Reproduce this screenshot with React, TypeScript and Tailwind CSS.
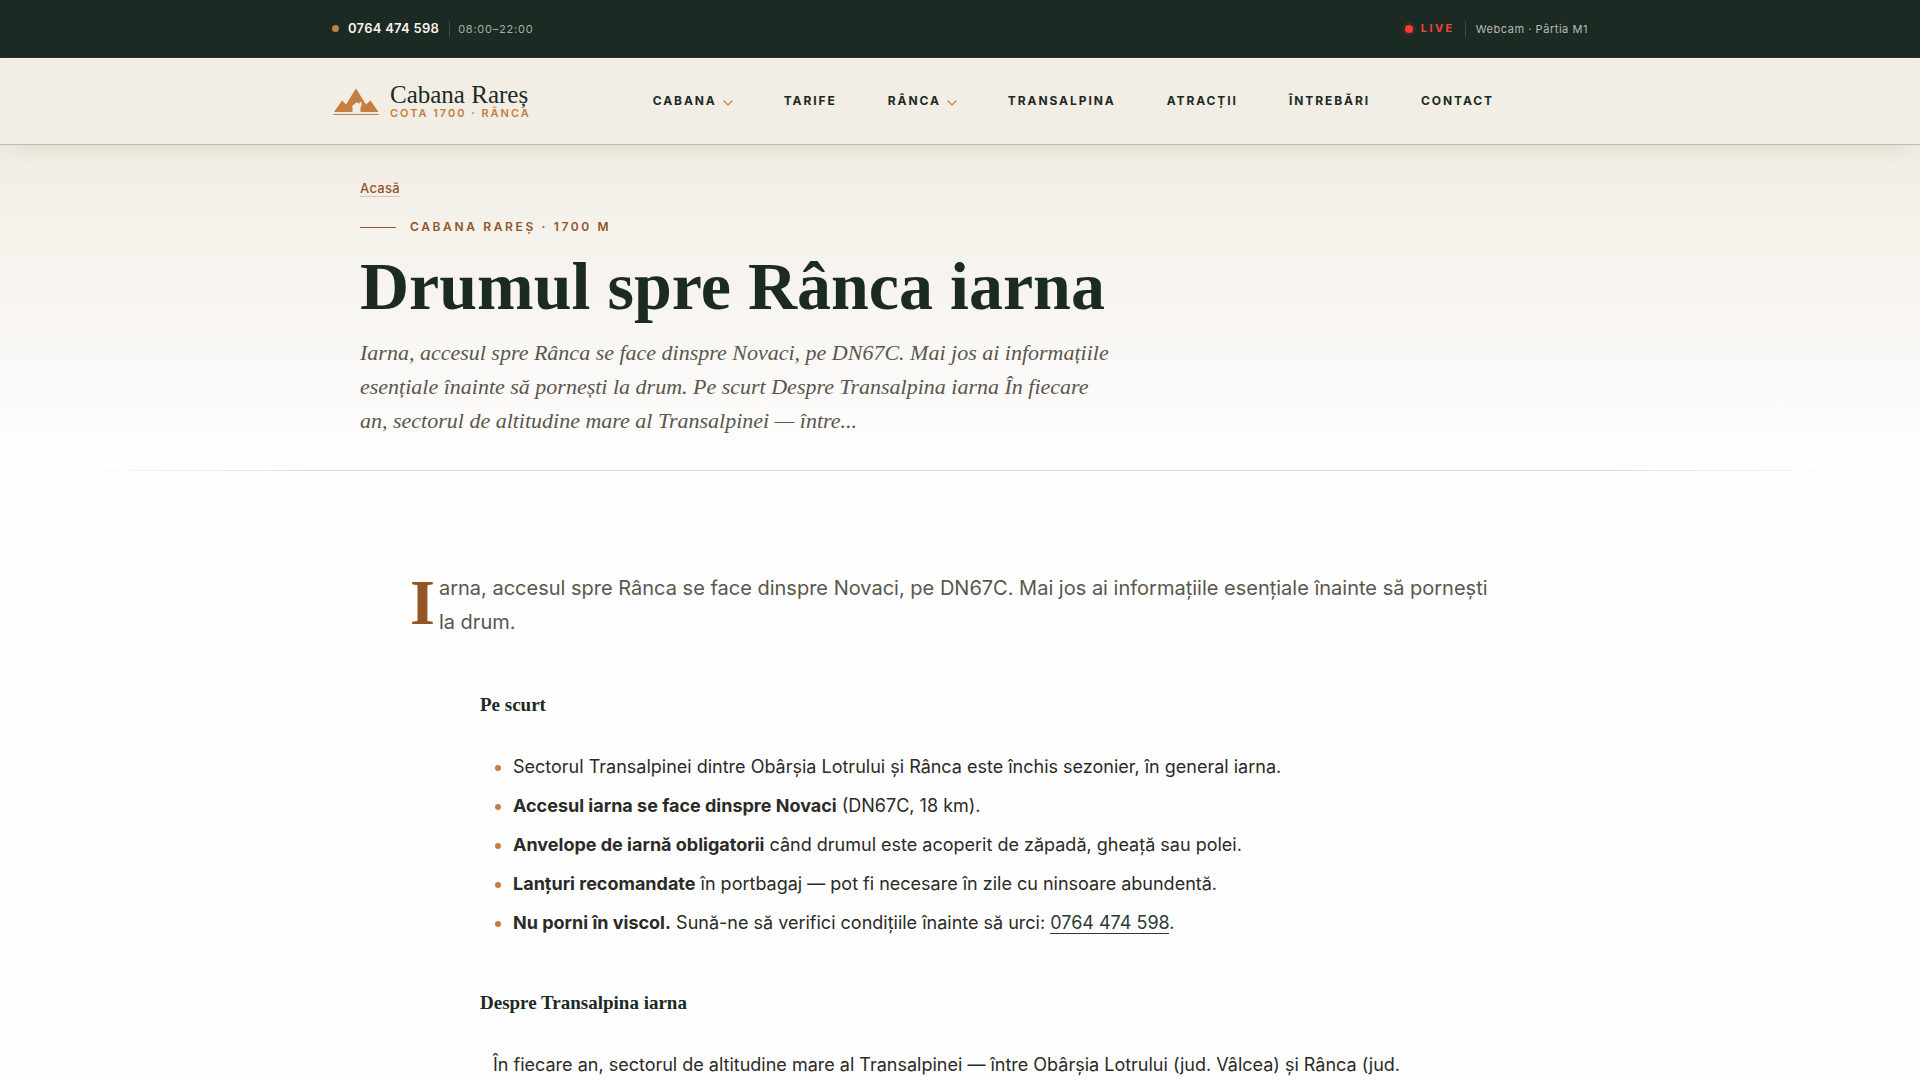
import React from "react";

const nav = [
  { label: "Cabana", menu: true },
  { label: "Tarife" },
  { label: "Rânca", menu: true },
  { label: "Transalpina" },
  { label: "Atracții" },
  { label: "Întrebări" },
  { label: "Contact" },
];

const points: { strong?: string; text: string; phone?: boolean }[] = [
  { text: "Sectorul Transalpinei dintre Obârșia Lotrului și Rânca este închis sezonier, în general iarna." },
  { strong: "Accesul iarna se face dinspre Novaci", text: " (DN67C, 18 km)." },
  { strong: "Anvelope de iarnă obligatorii", text: " când drumul este acoperit de zăpadă, gheață sau polei." },
  { strong: "Lanțuri recomandate", text: " în portbagaj — pot fi necesare în zile cu ninsoare abundentă." },
  { strong: "Nu porni în viscol.", text: " Sună-ne să verifici condițiile înainte să urci: ", phone: true },
];

function Logo() {
  return (
    <svg viewBox="0 0 48 28" className="h-7 w-12 shrink-0" aria-hidden="true">
      <path
        fill="#c67d42"
        d="M2 25 10 13.500 14 17.500 24 1.500 34 17.500 38.500 13.500 46.500 25H28.500V19.500H29.500V15H27.500V17L24.500 15.200 19.500 19.500H20.500V25Z"
      />
      <path stroke="#c67d42" strokeWidth="1" d="M1 27.500H47" />
    </svg>
  );
}

function Chevron() {
  return (
    <svg viewBox="0 0 10 6" className="mt-[3px] h-[6px] w-[10px]" fill="none" stroke="#c67d42" strokeWidth="1.100" aria-hidden="true">
      <path d="M0.500 0.500 5 5 9.500 0.500" />
    </svg>
  );
}

function TopBar() {
  return (
    <div className="border-b border-[#2c3128] bg-[#1b2a23] px-8">
      <div className="mx-auto flex h-[57px] max-w-[1256px] items-center justify-between text-[11px] tracking-[0.05em] text-[#a9aca5]">
        <div className="flex items-center">
          <span className="mr-[9px] size-[7px] rounded-full bg-[#c67d42]" />
          <a href="tel:0764474598" className="text-[13px] font-semibold tracking-[0.02em] text-[#f7f3ec]">
            0764 474 598
          </a>
          <span className="ml-[10px] border-l border-[#3f4b44] pl-2 leading-4 tracking-[0.07em]">08:00–22:00</span>
        </div>
        <a href="#webcam" className="flex items-center">
          <span className="mr-2 size-2 rounded-full bg-[#ff3b30] shadow-[0_0_0_3px_rgba(255,59,48,0.12)]" />
          <span className="font-bold tracking-[0.22em] text-[#f0433a]">LIVE</span>
          <span className="ml-[10px] border-l border-[#3f4b44] pl-[10px] leading-4 text-[#b8bab4]">Webcam · Pârtia M1</span>
        </a>
      </div>
    </div>
  );
}

function Header() {
  return (
    <header className="relative z-10 border-b border-[#bfb9a9] bg-[#f2ede5] px-8 shadow-[0_8px_24px_-10px_rgba(110,100,50,0.2)]">
      <div className="mx-auto flex h-[86px] max-w-[1256px] items-center">
        <a href="#acasa" className="flex items-center gap-[10px]">
          <Logo />
          <span className="flex flex-col">
            <span className="font-['Liberation_Serif',serif] text-[25px] leading-6 text-[#1b2a23]">Cabana Rareș</span>
            <span className="text-[11px] leading-3 font-semibold tracking-[0.18em] text-[#c67d42]">COTA 1700 · RÂNCA</span>
          </span>
        </a>
        <nav className="mr-[94px] ml-auto flex items-center gap-[51px]">
          {nav.map((item) =>
            item.menu ? (
              <button
                key={item.label}
                type="button"
                className="flex items-center gap-[6px] text-[12px] font-bold tracking-[0.16em] text-[#1b2a23] uppercase"
              >
                {item.label}
                <Chevron />
              </button>
            ) : (
              <a
                key={item.label}
                href={"#" + item.label.toLowerCase()}
                className="text-[12px] font-bold tracking-[0.16em] text-[#1b2a23] uppercase"
              >
                {item.label}
              </a>
            ),
          )}
        </nav>
      </div>
    </header>
  );
}

function Hero() {
  return (
    <section className="bg-linear-to-b from-[#f2ede5] to-[#fefefe] px-8">
      <div className="mx-auto max-w-[1200px] pt-[35px] pb-8">
        <nav aria-label="Breadcrumb" className="flex">
          <a href="#acasa" className="border-b border-[#dbc3ae] text-[13px] leading-4 font-medium tracking-[0.02em] text-[#935426]">
            Acasă
          </a>
        </nav>
        <p className="mt-5 flex items-center gap-[14px] text-[12px] leading-5 font-semibold tracking-[0.22em] text-[#935426]">
          <span className="h-px w-9 bg-[#935426]" />
          CABANA RAREȘ · 1700 M
        </p>
        <h1 className="mt-[14px] font-['Liberation_Serif',serif] text-[68px] leading-[70px] font-bold text-[#1b2a23]">
          Drumul spre Rânca iarna
        </h1>
        <p className="mt-[15px] max-w-[760px] font-['Liberation_Serif',serif] text-[22px] leading-[34px] text-[#5a564c] italic">
          Iarna, accesul spre Rânca se face dinspre Novaci, pe DN67C. Mai jos ai informațiile esențiale înainte să
          pornești la drum. Pe scurt Despre Transalpina iarna În fiecare an, sectorul de altitudine mare al
          Transalpinei — între...
        </p>
      </div>
    </section>
  );
}

function Article() {
  return (
    <div className="px-8">
      <article className="mx-auto max-w-[1100px] pt-[100px]">
        <p className="flow-root pr-3 text-[20px] leading-[34px] text-[#5a564c] first-letter:float-left first-letter:mr-1 first-letter:font-['Liberation_Serif',serif] first-letter:text-[64px] first-letter:leading-[64px] first-letter:font-bold first-letter:text-[#935426]">
          Iarna, accesul spre Rânca se face dinspre Novaci, pe DN67C. Mai jos ai informațiile esențiale înainte să
          pornești la drum.
        </p>
        <div className="mx-auto max-w-[960px] text-[18px] text-[#2b2a26]">
          <h2 className="mt-[52px] font-['Liberation_Serif',serif] text-[19px] leading-7 font-bold text-[#1b2a23]">
            Pe scurt
          </h2>
          <ul className="mt-8 flex flex-col gap-2 pl-[15px]">
            {points.map((p) => (
              <li key={p.text} className="flex items-center gap-3 leading-[31px]">
                <span className="mt-[2px] size-[6px] shrink-0 rounded-full bg-[#c67d42]" />
                <span>
                  {p.strong && <strong>{p.strong}</strong>}
                  {p.text}
                  {p.phone && (
                    <>
                      <a href="tel:0764474598" className="border-b border-[#2c3a33] text-[#2c3a33]">
                        0764 474 598
                      </a>
                      .
                    </>
                  )}
                </span>
              </li>
            ))}
          </ul>
          <h2 className="mt-[51px] font-['Liberation_Serif',serif] text-[19px] leading-7 font-bold text-[#1b2a23]">
            Despre Transalpina iarna
          </h2>
          <p className="mt-8 px-[13px] leading-[31px]">
            În fiecare an, sectorul de altitudine mare al Transalpinei — între Obârșia Lotrului (jud. Vâlcea) și Rânca (jud.
          </p>
        </div>
      </article>
    </div>
  );
}

export default function App() {
  return (
    <div className="min-h-screen bg-[#fefefe] font-['Inter',sans-serif]">
      <TopBar />
      <Header />
      <Hero />
      <div className="mx-[3%] h-px bg-[linear-gradient(to_right,transparent,#dedcd8_15%,#dedcd8_85%,transparent)]" />
      <Article />
    </div>
  );
}
